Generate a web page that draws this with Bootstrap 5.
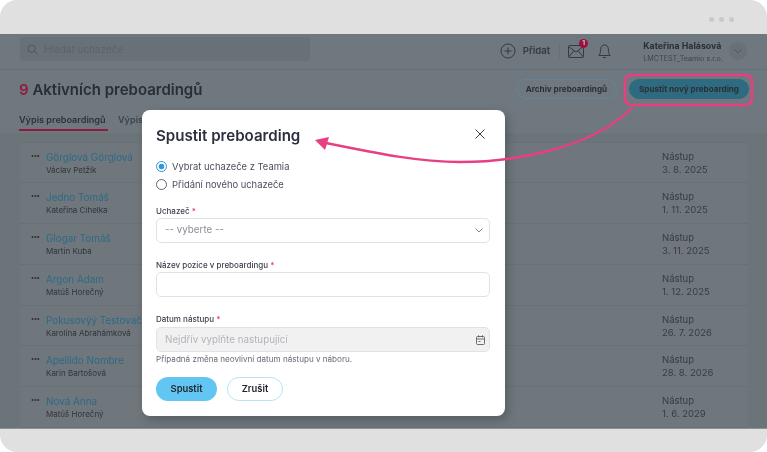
<!DOCTYPE html>
<html lang="cs">
<head>
    <meta charset="UTF-8">
    <title>Spustit preboarding</title>
    <meta name="viewport" content="width=device-width, initial-scale=1">
    <link href="https://cdn.jsdelivr.net/npm/bootstrap@5.3.3/dist/css/bootstrap.min.css" rel="stylesheet">
    <style>
        html, body { height: 452px; overflow: hidden; background: #fff; }
        body { font-family: Inter, "Open Sans", sans-serif; color: #2b3038; }
        .frame { height: 452px; background: #e0e0e0; border-radius: 17px; overflow: hidden; filter: blur(.3px); }
        .frame-top { height: 34px; padding: 17px 33px 0 0; gap: 5px; }
        .frame-top i { width: 5px; height: 5px; border-radius: 50%; background: #c9c9c9; display: block; }
        .frame-bottom { height: 24px; border-top: 1px solid #8d9498; }
        .app { height: 394px; background: #6b7479; position: relative; overflow: hidden; color: #2a3036; }

        .app-head { height: 36px; background: #6f787e; border-bottom: 1px solid #667076; padding: 3px 20px 0 20px; }
        .search-box { width: 290px; height: 24px; background: #687177; border-radius: 4px; padding: 1px 0 0 7px; gap: 6px; font-size: 10px; color: #5b646a; }
        .head-tools { margin-top: 3px; }
        .add-label { font-size: 9.6px; font-weight: 600; color: #343a40; margin-left: 7px; }
        .head-sep { width: 1px; height: 16px; background: #687177; margin: 0 8px 0 9px; }
        .mail-wrap { position: relative; width: 16px; height: 13px; margin-right: 14px; }
        .mail-badge { position: absolute; top: -6px; right: -4px; width: 9px; height: 9px; border-radius: 50%; background: #98123f; color: #d9c5cc; font-size: 6.5px; font-weight: 700; line-height: 9px; text-align: center; }
        .user-box { margin: 2px 0 0 32px; line-height: 1; }
        .user-name { font-size: 8.8px; font-weight: 700; color: #2a3036; margin-bottom: 4px; white-space: nowrap; }
        .user-firm { font-size: 7.2px; color: #3f464c; white-space: nowrap; }
        .user-caret { width: 18px; height: 18px; border-radius: 50%; background: #687177; margin-left: 6px; }

        .title-row { background: #6f787e; height: 63px; padding: 9px 18px 0 19px; }
        .page-title { font-size: 15px; font-weight: 600; line-height: 19px; margin: 1px 0 0; color: #282e35; }
        .page-title b { color: #8f1a40; font-weight: 600; }
        .pill { font-size: 8.1px; font-weight: 700; height: 20px; line-height: 18px; padding: 0 9px; border-radius: 10px; color: #2a3036; white-space: nowrap; }
        .pill-line { border: 1px solid #5d8797; margin-right: 12px; }
        .pill-fill { border: 1px solid #2e6a80; background: #2e6a80; }

        .tab-row { background: #6f787e; height: 29px; margin-top: -31px; padding-left: 19px; gap: 10px; position: relative; font-size: 9.1px; font-weight: 600; color: #2c3238; }
        .tab-on { padding-top: 11px; height: 29px; width: 89px; border-bottom: 2px solid #8f1a40; white-space: nowrap; }
        .tab-off { padding-top: 11px; color: #3d444a; white-space: nowrap; }

        .rows { margin: 11px 19px 0 20px; --bs-list-group-bg: #6f777c; --bs-list-group-border-color: #687176; --bs-list-group-border-radius: 3px; }
        .rows .list-group-item { height: 40.9px; padding: 7px 0 0 11px; border-left: 0; border-right: 0; color: inherit; }
        .row-dots { width: 15px; font-size: 6.5px; font-weight: 700; line-height: 12px; letter-spacing: -.2px; color: #2f353a; }
        .row-name { font-size: 9.9px; line-height: 14px; color: #2c6a88; white-space: nowrap; }
        .row-sub { font-size: 8px; line-height: 12px; color: #2f353a; white-space: nowrap; }
        .row-date { width: 86px; font-size: 9.5px; line-height: 13px; color: #363c42; }

        .dlg { position: absolute; left: 142px; top: 76px; width: 363px; height: 306px; padding: 17px 15px 0 14px; border: 0; border-radius: 8px; background: #fff; box-shadow: 3px 4px 8px rgba(40,48,54,.35); color: #2d3340; }
        .dlg-head { margin-bottom: 13px; }
        .dlg-title { font-size: 15.1px; font-weight: 600; line-height: 18px; margin: 0; color: #2c2f3d; }
        .dlg-close { width: 10px; height: 10px; margin: 2px 5px 0 0; }
        .pick { min-height: 0; margin: 0; padding-left: 16px; font-size: 9.4px; line-height: 18px; color: #4b4f5a; }
        .pick-last { margin-bottom: 12px; }
        .pick .form-check-input { width: 11px; height: 11px; margin: 3px 0 0 -16px; border: 1.5px solid #5f6470; }
        .pick .form-check-input:checked { background-color: #fff; border-color: #2f97d8; background-image: radial-gradient(circle, #2f97d8 0 2.6px, #fff 3.1px); }
        .field-label { font-size: 8px; font-weight: 500; line-height: 10px; margin: 0 0 2px; display: block; color: #3b3f4a; }
        .field-label em { color: #e0364f; font-style: normal; }
        .field-gap { margin-bottom: 17px; }
        .field-input { height: 25px; padding: 0 8px; font-size: 9.8px; border: 1px solid #e2e2e6; border-radius: 5px; color: #8a8e96; box-shadow: none; }
        .field-input::placeholder { color: #b1b4ba; }
        .field-input:disabled { background: #f1f1f2; }
        select.field-input { background-image: url("data:image/svg+xml,%3csvg xmlns='http://www.w3.org/2000/svg' viewBox='0 0 8 5'%3e%3cpath fill='none' stroke='%23666' stroke-width='.8' d='M.5.5 4 4 7.500.5'/%3e%3c/svg%3e"); background-size: 8px 5px; background-position: right 6px center; }
        .date-wrap { position: relative; margin-top: 3px; }
        .date-icon { position: absolute; right: 5px; top: 8px; width: 9px; height: 10px; }
        .help-note { font-size: 8.1px; line-height: 10px; margin: 2px 0 13px; color: #666a74; }
        .act { height: 24px; font-size: 9.4px; font-weight: 600; line-height: 1; border-radius: 12px; padding: 0; color: #22262e; }
        .act-go { width: 61px; background: #62c6f2; border: 0; }
        .act-no { width: 56px; background: #fff; border: 1px solid #b5e4f8; margin-left: 10px; }

        .callout { position: absolute; left: 0; top: 0; width: 767px; height: 394px; pointer-events: none; }
    </style>
</head>
<body>
    <div class="frame d-flex flex-column">
        <div class="frame-top d-flex justify-content-end"><i></i><i></i><i></i></div>

        <div class="app flex-grow-1">
            <div class="app-head d-flex align-items-start">
                <div class="search-box d-flex align-items-center">
                    <svg width="11" height="11" viewBox="0 0 12 12" fill="none" stroke="#4c555a" stroke-width="1"><circle cx="5" cy="5" r="4"/><path d="M8 8l3.300 3.300"/></svg>
                    <span>Hledat uchazeče</span>
                </div>
                <div class="head-tools d-flex align-items-center ms-auto">
                    <svg width="16" height="16" viewBox="0 0 16 16" fill="none" stroke="#333a40" stroke-width="1"><circle cx="8" cy="8" r="7"/><path d="M8 4.500v7M4.500 8h7"/></svg>
                    <span class="add-label">Přidat</span>
                    <span class="head-sep"></span>
                    <span class="mail-wrap">
                        <svg class="d-block" width="16" height="13" viewBox="0 0 16 13" fill="none" stroke="#333a40" stroke-width="1"><rect x=".5" y=".5" width="15" height="12" rx="1"/><path d="M.5 1.500L8 7l7.500-5.500M.8 12L6 5.500M15.200 12L10 5.500"/></svg>
                        <span class="mail-badge">1</span>
                    </span>
                    <svg width="13" height="15" viewBox="0 0 13 15" fill="none" stroke="#333a40" stroke-width="1"><path d="M6.500 1C4 1 2.600 3 2.600 5.500c0 3-.6 4.600-1.800 6h11.400c-1.200-1.400-1.800-3-1.800-6C10.400 3 9 1 6.500 1zM5 13.500h3"/></svg>
                    <div class="user-box">
                        <div class="user-name">Kateřina Halásová</div>
                        <div class="user-firm">LMCTEST_Teamio s.r.o.</div>
                    </div>
                    <div class="user-caret d-flex align-items-center justify-content-center">
                        <svg width="8" height="5" viewBox="0 0 8 5" fill="none" stroke="#4a5258" stroke-width=".8"><path d="M.5.5L4 4 7.500.5"/></svg>
                    </div>
                </div>
            </div>

            <div class="title-row d-flex align-items-start justify-content-between">
                <h1 class="page-title"><b>9</b> Aktivních preboardingů</h1>
                <div class="d-flex">
                    <span class="pill pill-line">Archiv preboardingů</span>
                    <span class="pill pill-fill">Spustit nový preboarding</span>
                </div>
            </div>

            <div class="tab-row d-flex">
                <span class="tab-on">Výpis preboardingů</span>
                <span class="tab-off">Výpis</span>
            </div>

            <div id="rows" class="list-group rows"></div>

            <div class="dlg">
                <div class="dlg-head d-flex justify-content-between align-items-start">
                    <h2 class="dlg-title">Spustit preboarding</h2>
                    <svg class="dlg-close" viewBox="0 0 10 10" fill="none" stroke="#3a3f48" stroke-width="1"><path d="M.5.5l9 9M9.500.5l-9 9"/></svg>
                </div>
                <div class="form-check pick">
                    <input class="form-check-input" type="radio" name="zdroj" id="z1" checked>
                    <label class="form-check-label" for="z1">Vybrat uchazeče z Teamia</label>
                </div>
                <div class="form-check pick pick-last">
                    <input class="form-check-input" type="radio" name="zdroj" id="z2">
                    <label class="form-check-label" for="z2">Přidání nového uchazeče</label>
                </div>
                <label class="field-label">Uchazeč <em>*</em></label>
                <select class="form-select field-input field-gap"><option>-- vyberte --</option></select>
                <label class="field-label">Název pozice v preboardingu <em>*</em></label>
                <input type="text" class="form-control field-input field-gap">
                <label class="field-label">Datum nástupu <em>*</em></label>
                <div class="date-wrap">
                    <input type="text" class="form-control field-input" placeholder="Nejdřív vyplňte nastupující" disabled>
                    <svg class="date-icon" viewBox="0 0 9 10" fill="none" stroke="#5a5e68" stroke-width=".9"><rect x=".5" y="1.500" width="8" height="8" rx="1"/><path d="M.5 4h8M2.500.3v2M6.500.3v2M2.500 6.500h2"/></svg>
                </div>
                <p class="help-note">Případná změna neovlivní datum nástupu v náboru.</p>
                <div class="d-flex">
                    <button type="button" class="btn act act-go">Spustit</button>
                    <button type="button" class="btn act act-no">Zrušit</button>
                </div>
            </div>

            <svg class="callout" viewBox="0 0 767 394" fill="none">
                <rect x="625" y="41" width="127" height="30" rx="6" stroke="#e83e82" stroke-width="2.500"/>
                <path d="M632 74C590 116 510 128 460 128C420 128 380 120 326 109" stroke="#e83e82" stroke-width="2.400"/>
                <path d="M315 106L329 103L325 116Z" fill="#e83e82"/>
            </svg>
        </div>

        <div class="frame-bottom"></div>
    </div>

    <script>
        const rowsData = [
            ['Görglová Görglová', 'Václav Petžík', '3. 8. 2025'],
            ['Jedno Tomáš', 'Kateřina Cihelka', '1. 11. 2025'],
            ['Glogar Tomáš', 'Martin Kuba', '3. 11. 2025'],
            ['Argon Adam', 'Matúš Horečný', '1. 12. 2025'],
            ['Pokusovýý Testovačč', 'Karolína Abrahámková', '26. 7. 2026'],
            ['Apellido Nombre', 'Karin Bartošová', '28. 8. 2026'],
            ['Nová Anna', 'Matúš Horečný', '1. 6. 2029']
        ];
        let html = '';
        rowsData.forEach(r => {
            html += `
                <div class="list-group-item d-flex">
                    <div class="row-dots">•••</div>
                    <div class="flex-grow-1">
                        <div class="row-name">${r[0]}</div>
                        <div class="row-sub">${r[1]}</div>
                    </div>
                    <div class="row-date">Nástup<br>${r[2]}</div>
                </div>`;
        });
        document.getElementById('rows').innerHTML = html;
    </script>
    <script src="https://cdn.jsdelivr.net/npm/bootstrap@5.3.3/dist/js/bootstrap.bundle.min.js"></script>
</body>
</html>
